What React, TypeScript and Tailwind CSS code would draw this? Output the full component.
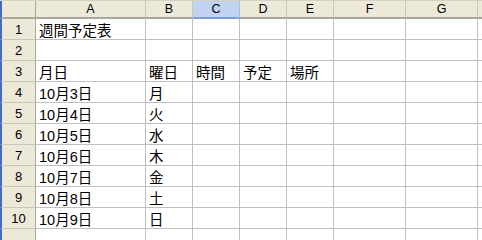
import React from "react";

const colDefs = [
  { l: "A", w: "w-[110px]" },
  { l: "B", w: "w-[47px]" },
  { l: "C", w: "w-[47px]" },
  { l: "D", w: "w-[47px]" },
  { l: "E", w: "w-[47px]" },
  { l: "F", w: "w-[72px]" },
  { l: "G", w: "w-[72px]" },
  { l: "", w: "w-[72px]" },
];

const data: string[][] = [
  ["週間予定表"],
  [],
  ["月日", "曜日", "時間", "予定", "場所"],
  ["10月3日", "月"],
  ["10月4日", "火"],
  ["10月5日", "水"],
  ["10月6日", "木"],
  ["10月7日", "金"],
  ["10月8日", "土"],
  ["10月9日", "日"],
  [],
];

export default function App() {
  return (
    <div
      className="w-[482px] h-[240px] overflow-hidden bg-white"
      style={{ fontFamily: '"Liberation Sans", "Noto Sans CJK JP", sans-serif' }}
    >
      <div className="flex w-max h-[19px] border-t border-[#d6d2c2] bg-[#ece9d8]">
        <div className="w-[36px] shrink-0 border-l-2 border-l-[#3d6cc0] border-r border-r-[#aca899] border-b-2 border-b-[#aca899]" />
        {colDefs.map((c, i) => (
          <div
            key={i}
            className={
              "shrink-0 flex items-center justify-center text-[12.5px] leading-none text-black border-r " +
              c.w +
              (c.l === "C"
                ? " bg-[#c2d3f1] border-r-[#aeb9d4] border-b-2 border-b-[#7f9ed8]"
                : " border-r-[#cbc7b8] border-b-2 border-b-[#aca899]")
            }
          >
            {c.l}
          </div>
        ))}
      </div>
      {data.map((row, r) => (
        <div key={r} className="flex w-max h-[21px]">
          <div className="w-[36px] shrink-0 flex items-center justify-center bg-[#ece9d8] border-l-2 border-l-[#3d6cc0] border-r border-r-[#aca899] border-b border-b-[#cbc7b8] text-[13px] leading-none text-black">
            {r < 10 ? r + 1 : ""}
          </div>
          {colDefs.map((c, i) => (
            <div
              key={i}
              className={
                "shrink-0 flex items-end pl-[3px] border-r border-b border-[#c0c0c0] text-[14.5px] leading-[16px] text-black whitespace-nowrap overflow-visible " +
                c.w
              }
            >
              {row[i] ?? ""}
            </div>
          ))}
        </div>
      ))}
    </div>
  );
}
